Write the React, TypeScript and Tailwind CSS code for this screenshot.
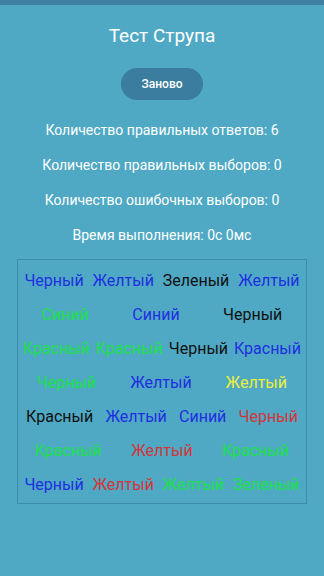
import React from 'react';

type Word = { t: string; c: string };

const B = 'text-[#1f2fe0]';
const G = 'text-[#1ee04a]';
const K = 'text-[#111111]';
const Y = 'text-[#ecef3c]';
const R = 'text-[#d2363a]';

const rows: Word[][] = [
  [{ t: 'Черный', c: B }, { t: 'Желтый', c: B }, { t: 'Зеленый', c: K }, { t: 'Желтый', c: B }],
  [{ t: 'Синий', c: G }, { t: 'Синий', c: B }, { t: 'Черный', c: K }],
  [{ t: 'Красный', c: G }, { t: 'Красный', c: G }, { t: 'Черный', c: K }, { t: 'Красный', c: B }],
  [{ t: 'Черный', c: G }, { t: 'Желтый', c: B }, { t: 'Желтый', c: Y }],
  [{ t: 'Красный', c: K }, { t: 'Желтый', c: B }, { t: 'Синий', c: B }, { t: 'Черный', c: R }],
  [{ t: 'Красный', c: G }, { t: 'Желтый', c: R }, { t: 'Красный', c: G }],
  [{ t: 'Черный', c: B }, { t: 'Желтый', c: R }, { t: 'Желтый', c: G }, { t: 'Зеленый', c: G }],
];

const stats = [
  'Количество правильных ответов: 6',
  'Количество правильных выборов: 0',
  'Количество ошибочных выборов: 0',
  'Время выполнения: 0с 0мс',
];

export default function App() {
  return (
    <div className="min-h-screen bg-[#4fa9c4] flex flex-col font-['Roboto',sans-serif] text-white">
      {/* status strip */}
      <div className="h-[5px] bg-[#3f80a2]"></div>

      <h1 className="mt-[19px] text-center text-[19px] leading-[24px]">Тест Струпа</h1>

      <div className="mt-[20px] flex justify-center">
        <button className="w-[82px] h-[32px] rounded-full bg-[#3a7d9e] text-[12px] font-medium text-white">
          Заново
        </button>
      </div>

      <div className="mt-[13px] flex flex-col">
        {stats.map((s, i) => (
          <div key={i} className="h-[35px] flex items-center justify-center text-[14px]">
            {s}
          </div>
        ))}
      </div>

      <div className="mt-[6px] mx-[17px] w-[290px] border border-[#3b8eaa] pt-[4px] pb-[1px] px-[2px]">
        {rows.map((row, i) => (
          <div key={i} className="h-[34px] flex items-center justify-around text-[16px] whitespace-nowrap">
            {row.map((w, j) => (
              <span key={j} className={w.c}>
                {w.t}
              </span>
            ))}
          </div>
        ))}
      </div>
    </div>
  );
}
